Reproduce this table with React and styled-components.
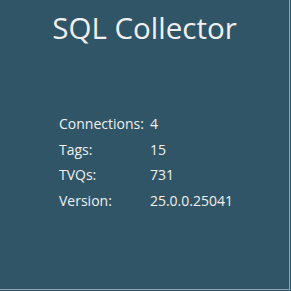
import React from 'react';
import styled, { createGlobalStyle } from 'styled-components';

const Global = createGlobalStyle`
  html, body {
    margin: 0;
    padding: 0;
    background: #305566;
  }
`

const stats = [
  ['Connections:', '4'],
  ['Tags:', '15'],
  ['TVQs:', '731'],
  ['Version:', '25.0.0.25041'],
];

const App = () => (
  <>
    <Global />
    <Panel>
      <Title>SQL Collector</Title>
      <Stats>
        {stats.map(([label, value]) => (
          <React.Fragment key={label}>
            <Label>{label}</Label>
            <Value>{value}</Value>
          </React.Fragment>
        ))}
      </Stats>
    </Panel>
  </>
);

const Panel = styled.div`
  width: 290px;
  height: 290px;
  box-sizing: border-box;
  background: #305566;
  border-right: 1px solid #8fa3ac;
  border-bottom: 1px solid #8fa3ac;
  font-family: "Open Sans", "Noto Sans", sans-serif;
  color: #f0f0f0;
  padding-top: 8px;
`

const Title = styled.h1`
  margin: 0;
  text-align: center;
  font-size: 29.5px;
  font-weight: 400;
  line-height: 40px;
`

const Stats = styled.div`
  display: grid;
  grid-template-columns: auto auto;
  justify-content: start;
  column-gap: 6px;
  row-gap: 0;
  margin: 63px 0 0 59px;
  font-size: 14px;
  line-height: 25.7px;
`

const Label = styled.span``

const Value = styled.span``

export default App;
